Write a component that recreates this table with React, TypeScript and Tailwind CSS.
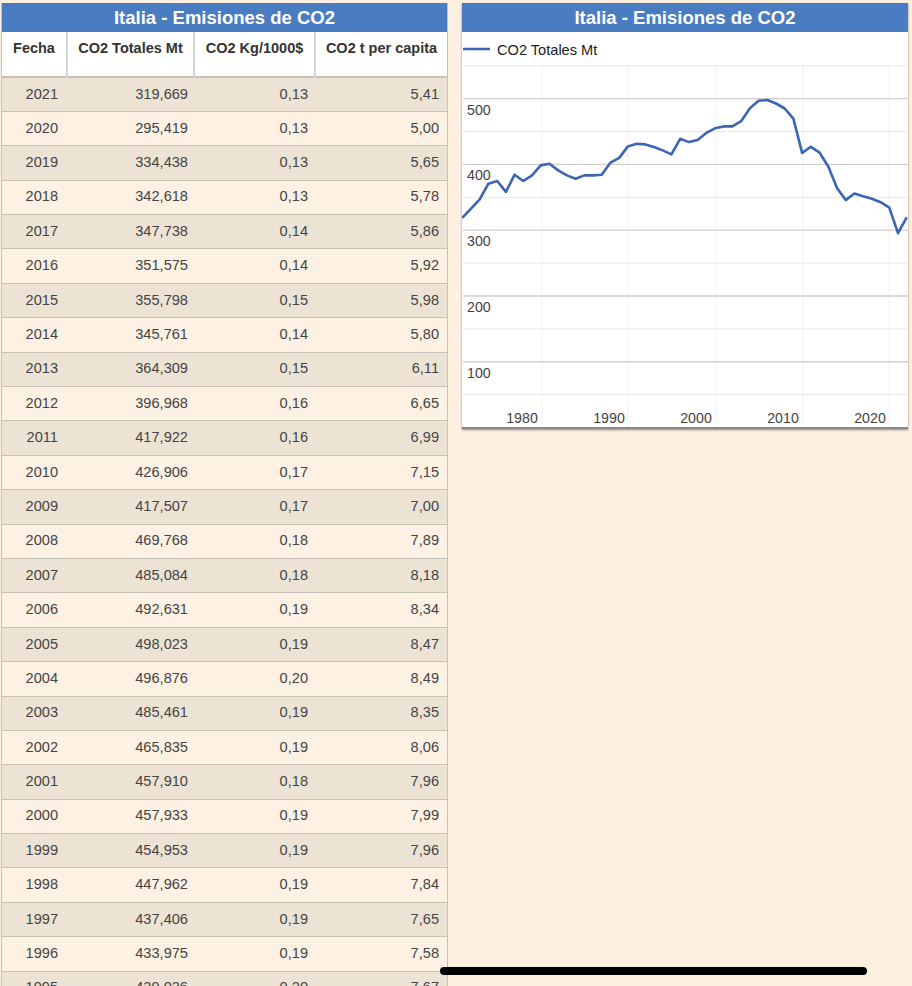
const rows: [string, string, string, string][] = [
  ["2021", "319,669", "0,13", "5,41"],
  ["2020", "295,419", "0,13", "5,00"],
  ["2019", "334,438", "0,13", "5,65"],
  ["2018", "342,618", "0,13", "5,78"],
  ["2017", "347,738", "0,14", "5,86"],
  ["2016", "351,575", "0,14", "5,92"],
  ["2015", "355,798", "0,15", "5,98"],
  ["2014", "345,761", "0,14", "5,80"],
  ["2013", "364,309", "0,15", "6,11"],
  ["2012", "396,968", "0,16", "6,65"],
  ["2011", "417,922", "0,16", "6,99"],
  ["2010", "426,906", "0,17", "7,15"],
  ["2009", "417,507", "0,17", "7,00"],
  ["2008", "469,768", "0,18", "7,89"],
  ["2007", "485,084", "0,18", "8,18"],
  ["2006", "492,631", "0,19", "8,34"],
  ["2005", "498,023", "0,19", "8,47"],
  ["2004", "496,876", "0,20", "8,49"],
  ["2003", "485,461", "0,19", "8,35"],
  ["2002", "465,835", "0,19", "8,06"],
  ["2001", "457,910", "0,18", "7,96"],
  ["2000", "457,933", "0,19", "7,99"],
  ["1999", "454,953", "0,19", "7,96"],
  ["1998", "447,962", "0,19", "7,84"],
  ["1997", "437,406", "0,19", "7,65"],
  ["1996", "433,975", "0,19", "7,58"],
  ["1995", "439,036", "0,20", "7,67"],
];

// 1970 .. 1994 read off the chart, the rest comes from the table
const early = [
  318.7, 332.8, 347, 370.8, 374.9, 358.2, 384.5, 374.9, 383.4, 398.6, 401.2,
  391, 383.4, 378.4, 383.4, 383.4, 384.5, 402.7, 409.9, 427.5, 431.6, 430.5,
  426.6, 421.4, 415.3,
];
const late = rows.map((r) => parseFloat(r[1].replace(",", "."))).reverse();
const series = [...early, ...late];

const px = (i: number) => 462.3 + i * 8.714;
const py = (v: number) => 428.5 - v * 0.6576;

function Chart() {
  const points = series.map((v, i) => `${px(i).toFixed(1)},${py(v).toFixed(1)}`).join(" ");
  const major = [500, 400, 300, 200, 100];
  const minor = [550, 450, 350, 250, 150, 50];
  const vlines = [542, 628, 716, 803, 889];
  const years = [
    { x: 522, t: "1980" },
    { x: 609, t: "1990" },
    { x: 696, t: "2000" },
    { x: 783, t: "2010" },
    { x: 870, t: "2020" },
  ];
  return (
    <div className="w-[446px] shrink-0 self-start bg-white shadow-[0_1px_2px_rgba(0,0,0,0.45)]">
      <div className="flex h-[29px] items-center justify-center bg-[#4a7cc2] text-[18.5px] font-bold text-white">
        Italia - Emisiones de CO2
      </div>
      <svg width="446" height="397" viewBox="462 33 446 397" className="block">
        {vlines.map((x) => (
          <line key={x} x1={x} x2={x} y1={66} y2={428} stroke="#f1f1f1" strokeWidth="1" />
        ))}
        {minor.map((v) => (
          <line key={v} x1={463} x2={908} y1={py(v)} y2={py(v)} stroke="#e8e8e8" strokeWidth="1" />
        ))}
        {major.map((v) => (
          <line key={v} x1={463} x2={908} y1={py(v)} y2={py(v)} stroke="#cfcfcf" strokeWidth="1.3" />
        ))}
        {major.map((v) => (
          <text key={v} x={467} y={py(v) + 16} fontSize="14.2" fill="#444">
            {v}
          </text>
        ))}
        {years.map((y) => (
          <text key={y.t} x={y.x} y={423.5} fontSize="14.2" fill="#444" textAnchor="middle">
            {y.t}
          </text>
        ))}
        <line x1={463} x2={490} y1={50} y2={50} stroke="#3c66b4" strokeWidth="2.5" />
        <text x={497} y={55.5} fontSize="14.6" fill="#222">
          CO2 Totales Mt
        </text>
        <polyline
          points={points}
          fill="none"
          stroke="#3c66b4"
          strokeWidth="2.6"
          strokeLinejoin="round"
        />
        <line x1={462} x2={908} y1={429} y2={429} stroke="#8a8a8a" strokeWidth="2" />
      </svg>
    </div>
  );
}

export default function App() {
  return (
    <div
      className="relative h-[986px] overflow-hidden bg-[#fdf0e1]"
      style={{ fontFamily: '"Liberation Sans", Arial, sans-serif' }}
    >
      <div className="flex items-start gap-[14px] pl-px pt-[3px]">
        {/* Table */}
        <div className="w-[447px] shrink-0 border-x border-[#c9c1b6]">
          <div className="flex h-[29px] items-center justify-center bg-[#4a7cc2] text-[18.5px] font-bold text-white">
            Italia - Emisiones de CO2
          </div>
          <table className="w-full table-fixed border-collapse">
            <colgroup>
              <col className="w-[65px]" />
              <col className="w-[127px]" />
              <col className="w-[121px]" />
              <col />
            </colgroup>
            <thead>
              <tr className="h-[45px] border-b-2 border-[#c9c1b6] bg-white">
                {["Fecha", "CO2 Totales Mt", "CO2 Kg/1000$", "CO2 t per capita"].map((h, i) => (
                  <th
                    key={h}
                    className={
                      "px-1 pt-[6px] align-top text-[14.5px] font-bold whitespace-nowrap text-[#333] " +
                      (i < 3 ? "border-r-2 border-[#d4d4d4]" : "")
                    }
                  >
                    {h}
                  </th>
                ))}
              </tr>
            </thead>
            <tbody>
              {rows.map((r, i) => (
                <tr
                  key={r[0]}
                  className={
                    "h-[34.4px] border-b border-[#c9c1b6] text-[14.6px] text-[#444] " +
                    (i % 2 === 0 ? "bg-[#ece3d5]" : "bg-[#fdf1e3]")
                  }
                >
                  <td className="pr-[9px] text-right">{r[0]}</td>
                  <td className="pr-[6px] text-right">{r[1]}</td>
                  <td className="pr-[7px] text-right">{r[2]}</td>
                  <td className="pr-[8px] text-right">{r[3]}</td>
                </tr>
              ))}
            </tbody>
          </table>
        </div>

        <Chart />
      </div>

      {/* home indicator */}
      <div className="absolute left-[440px] top-[967px] h-[8px] w-[427px] rounded-full bg-black" />
    </div>
  );
}
